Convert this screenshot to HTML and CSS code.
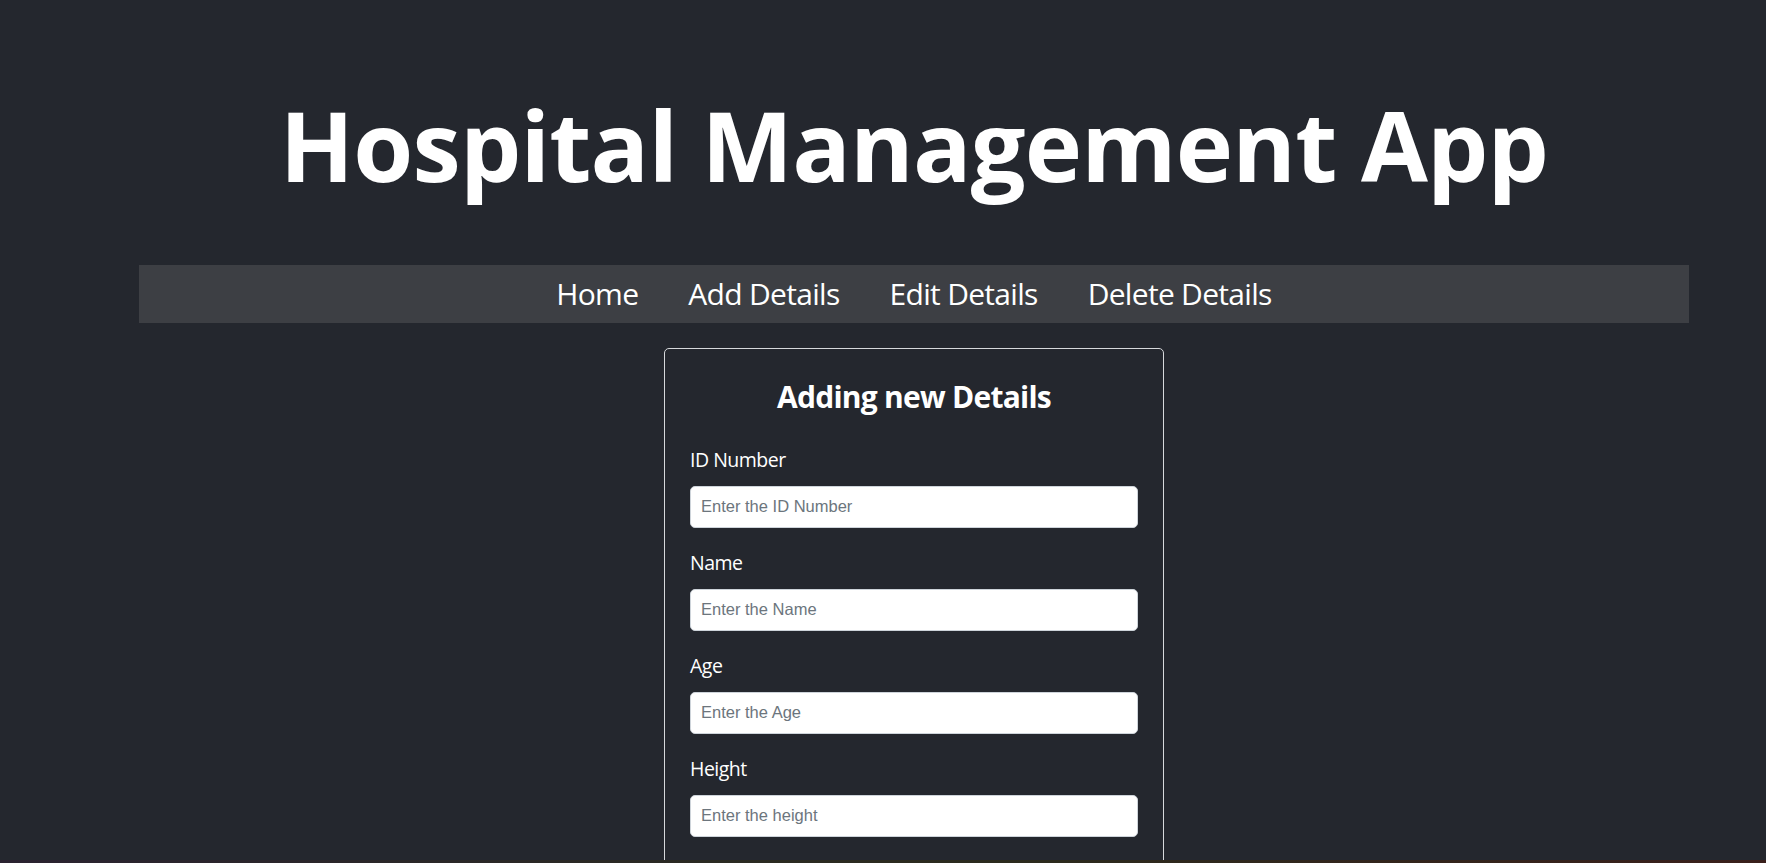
FILE: index.html
```html
<!DOCTYPE html>
<html lang="en">
<head>
<meta charset="utf-8">
<title>Hospital Management App</title>
<link rel="stylesheet" href="styles.css">
</head>
<body>
<main class="page">
  <h1 class="title">Hospital Management App</h1>
  <nav class="navbar">
    <a class="nav-link" href="#">Home</a>
    <a class="nav-link" href="#">Add Details</a>
    <a class="nav-link" href="#">Edit Details</a>
    <a class="nav-link" href="#">Delete Details</a>
  </nav>
  <form class="card">
    <h2 class="card-title">Adding new Details</h2>
    <div class="field">
      <label class="field-label" for="id">ID Number</label>
      <input class="field-input" id="id" type="text" placeholder="Enter the ID Number">
    </div>
    <div class="field">
      <label class="field-label" for="name">Name</label>
      <input class="field-input" id="name" type="text" placeholder="Enter the Name">
    </div>
    <div class="field">
      <label class="field-label" for="age">Age</label>
      <input class="field-input" id="age" type="text" placeholder="Enter the Age">
    </div>
    <div class="field">
      <label class="field-label" for="height">Height</label>
      <input class="field-input" id="height" type="text" placeholder="Enter the height">
    </div>
  </form>
</main>
<div class="taskbar-edge"></div>
</body>
</html>
```
FILE: styles.css
```css
html, body {
  margin: 0;
  padding: 0;
  background: #24272e;
  overflow: hidden;
  height: 100%;
}
body {
  font-family: "Open Sans", "Noto Sans", sans-serif;
  color: #ffffff;
}
.page {
  display: flex;
  flex-direction: column;
  align-items: center;
  padding: 85.8px 77px 0 139px;
}
.title {
  margin: 0;
  font-size: 97px;
  font-weight: 700;
  line-height: 1.2;
  letter-spacing: -0.8px;
  text-align: center;
}
.navbar {
  align-self: stretch;
  margin-top: 62.8px;
  background: #3d3f44;
  padding: 6.5px 0;
  display: flex;
  justify-content: center;
  gap: 50px;
}
.nav-link {
  color: #ffffff;
  text-decoration: none;
  font-size: 30px;
  line-height: 1.5;
  letter-spacing: -0.7px;
}
.card {
  margin-top: 25.3px;
  width: 500px;
  box-sizing: border-box;
  border: 1px solid #d6d8db;
  border-radius: 5px;
  padding: 29.4px 25px 40px;
}
.card-title {
  margin: 0 0 30.4px;
  font-size: 30px;
  font-weight: 700;
  line-height: 1.2;
  letter-spacing: -0.75px;
  text-align: center;
}
.field {
  display: flex;
  flex-direction: column;
  margin-bottom: 20px;
}
.field-label {
  font-size: 19.5px;
  line-height: 1.5;
  letter-spacing: -0.5px;
  margin-bottom: 11.65px;
}
.field-input {
  box-sizing: border-box;
  height: 42px;
  width: 100%;
  margin: 0;
  padding: 0 10px;
  border: 1px solid #ced4da;
  border-radius: 5px;
  background: #ffffff;
  font-family: "Liberation Sans", Arial, sans-serif;
  font-size: 16.5px;
  color: #212529;
}
.field-input::placeholder {
  color: #6c757d;
  opacity: 1;
}
.taskbar-edge {
  position: fixed;
  left: 0;
  right: 0;
  bottom: 0;
  height: 3px;
  background: linear-gradient(90deg, #2a2230 0%, #2a2a22 40%, #2c2a1c 60%, #3a1f1b 100%);
}
```
